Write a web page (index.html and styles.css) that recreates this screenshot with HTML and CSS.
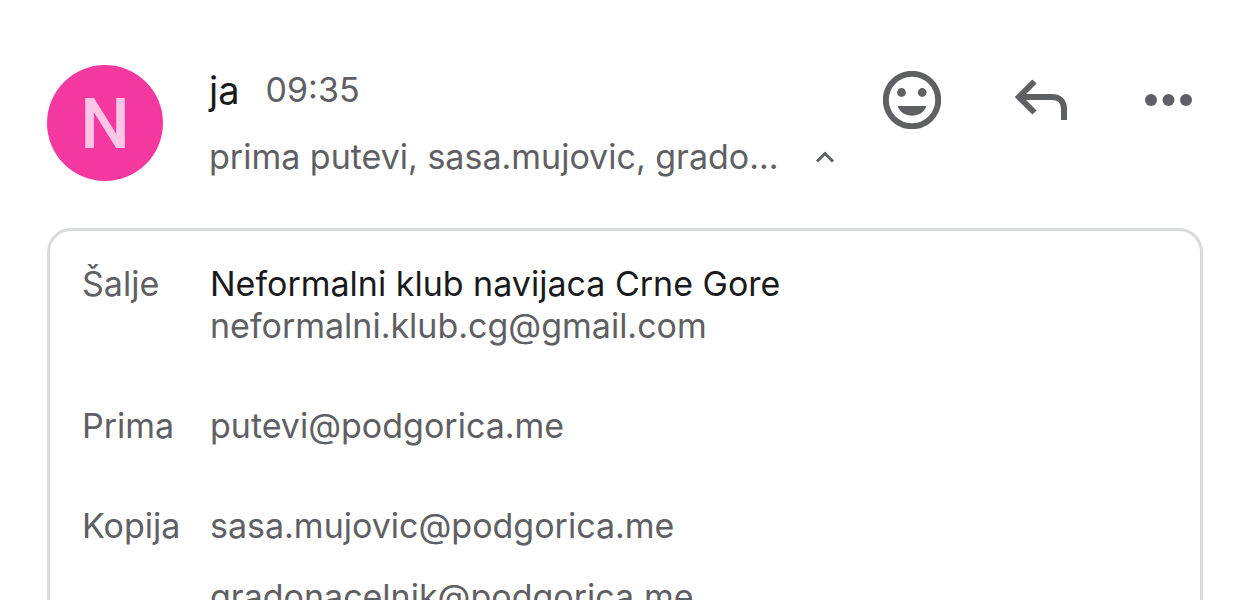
FILE: index.html
```
<!DOCTYPE html>
<html lang="sr-Latn-ME">

<head>
	<meta charset="UTF-8">
	<meta name="viewport" content="width=device-width, initial-scale=1.0">
	<title>Message details</title>
	<link rel="stylesheet" href="styles.css">
</head>

<body>
	<main class="message">
		<header class="message-header">
			<div class="avatar">N</div>
			<div class="summary">
				<div class="sender-line">
					<span class="sender">ja</span>
					<time class="time" datetime="09:35">09:35</time>
				</div>
				<button class="recipients" type="button" aria-expanded="true">
					<span>prima putevi, sasa.mujovic, grado...</span>
					<svg class="chevron" viewBox="0 0 20 12" aria-hidden="true">
						<path d="M2 10.500l8-8 8 8" />
					</svg>
				</button>
			</div>
			<div class="actions">
				<button class="action" type="button" aria-label="React">
					<svg width="58" height="58" viewBox="0 0 58 58">
						<circle class="stroke" cx="29" cy="29" r="26.200" />
						<circle cx="18.500" cy="21.500" r="4.400" />
						<circle cx="39.200" cy="21.500" r="4.400" />
						<path d="M14.500 35h29c-2.200 6-8 9.800-14.500 9.800S16.700 41 14.500 35z" />
					</svg>
				</button>
				<button class="action" type="button" aria-label="Reply">
					<svg width="56" height="42" viewBox="0 0 56 42">
						<path class="stroke" d="M19.500 2.500L4 18l15.500 15.500M4 18h33c7.500 0 12 4.500 12 12v11" />
					</svg>
				</button>
				<button class="action" type="button" aria-label="More">
					<svg width="47" height="12" viewBox="0 0 47 12">
						<circle cx="6" cy="6" r="6" />
						<circle cx="23.500" cy="6" r="6" />
						<circle cx="41" cy="6" r="6" />
					</svg>
				</button>
			</div>
		</header>

		<dl class="details">
			<div class="row">
				<dt>Šalje</dt>
				<dd>
					<div class="name">Neformalni klub navijaca Crne Gore</div>
					<div>neformalni.klub.cg@gmail.com</div>
				</dd>
			</div>
			<div class="row">
				<dt>Prima</dt>
				<dd>putevi@podgorica.me</dd>
			</div>
			<div class="row">
				<dt>Kopija</dt>
				<dd class="copies">
					<div>sasa.mujovic@podgorica.me</div>
					<div>gradonacelnik@podgorica.me</div>
				</dd>
			</div>
		</dl>
	</main>
</body>

</html>
```
FILE: styles.css
```
* {
	margin: 0;
	padding: 0;
	box-sizing: border-box;
}

:root {
	--text: #1a1a1c;
	--text-secondary: #5f6064;
	--border: #dadbdc;
	--avatar: #f538a0;
}

html {
	overflow: hidden;
}

body {
	background: white;
	color: var(--text-secondary);
	font-family: Inter, "Liberation Sans", sans-serif;
	font-size: 34px;
	line-height: 42px;
}

button {
	border: none;
	background: none;
	color: inherit;
	font: inherit;
	cursor: pointer;
}

.message {
	padding: 65px 47px 0;
}

.message-header {
	display: flex;
	align-items: flex-start;
}

.avatar {
	flex: none;
	width: 116px;
	height: 116px;
	margin-right: 46px;
	border-radius: 50%;
	background: var(--avatar);
	color: #fdc6e6;
	font-family: Roboto, sans-serif;
	font-size: 70px;
	font-weight: 500;
	line-height: 118px;
	text-align: center;
}

.summary {
	flex: 1;
	padding-top: 4px;
}

.sender-line {
	display: flex;
	gap: 26px;
	margin-bottom: 25px;
}

.sender {
	color: var(--text);
	font-size: 38px;
}

.recipients {
	display: flex;
	align-items: center;
	gap: 36px;
	white-space: nowrap;
}

.chevron {
	width: 20px;
	height: 12px;
	fill: none;
	stroke: currentColor;
	stroke-width: 3;
}

.actions {
	display: flex;
	align-items: center;
	gap: 74px;
	padding: 6px 11px 0 0;
}

.action svg {
	display: block;
	fill: currentColor;
}

.action .stroke {
	fill: none;
	stroke: currentColor;
	stroke-width: 6;
}

.details {
	margin-top: 47px;
	padding: 32px;
	border: 3px solid var(--border);
	border-radius: 24px;
}

.row {
	display: flex;
	margin-bottom: 58px;
}

.row dt {
	flex: none;
	width: 128px;
}

.name {
	color: var(--text);
}

.copies {
	display: grid;
	gap: 29px;
}
```
